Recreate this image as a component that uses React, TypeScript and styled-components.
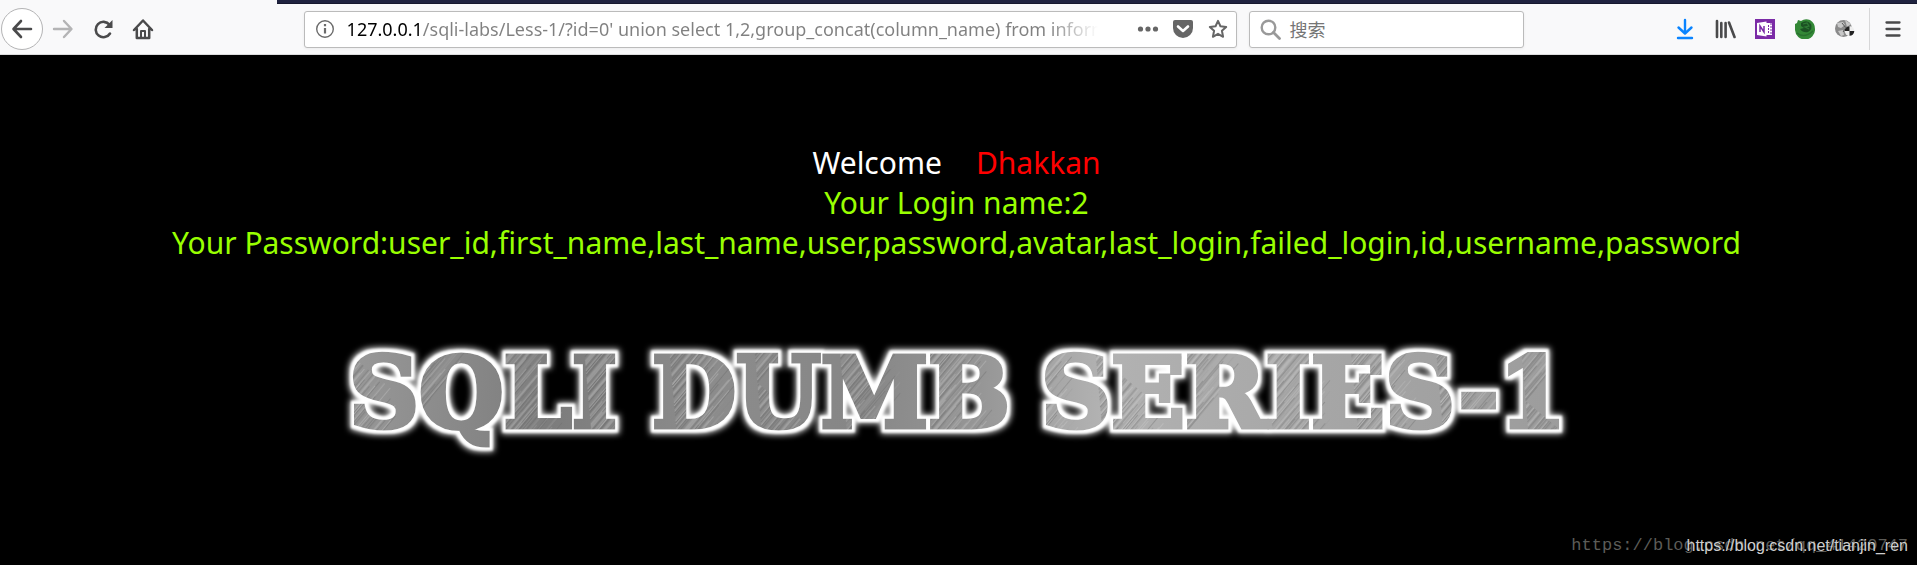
import React from "react";
import styled, { createGlobalStyle } from "styled-components";

const GlobalStyle = createGlobalStyle`
  * { box-sizing: border-box; }
  html, body, #root { margin: 0; min-height: 100vh; background: #000; }
  body { font-family: "Noto Sans", "Open Sans", "Noto Sans CJK SC", sans-serif; }
`;

const Window = styled.div`
  position: relative;
  display: flex;
  flex-direction: column;
  min-height: 100vh;
  overflow: hidden;
`;

const TabStrip = styled.div`
  display: flex;
  height: 4px;
  background: linear-gradient(#202340 75%, #0c0c1c);
`;

const ActiveTab = styled.div`
  width: 277px;
  background: #f9f9fa;
`;

const Toolbar = styled.header`
  display: flex;
  align-items: center;
  height: 51px;
  padding: 0 4px 0 1px;
  background: #f9f9fa;
  border-bottom: 1px solid #dcdcdd;
`;

const Spacer = styled.div`
  flex: 10 1 0;
`;

const Nav = styled.nav`
  display: flex;
  align-items: center;
`;

const IconButton = styled.button<{ $muted?: boolean }>`
  display: flex;
  align-items: center;
  justify-content: center;
  width: 40px;
  height: 40px;
  padding: 0;
  border: 0;
  background: none;
  color: ${(p) => (p.$muted ? "#b4b4b5" : "#4a4a4b")};
`;

const BackButton = styled(IconButton)`
  width: 42px;
  height: 42px;
  border: 1px solid #b4b4b5;
  border-radius: 50%;
  background: #fff;
`;

const Field = styled.div`
  display: flex;
  align-items: center;
  height: 37px;
  border: 1px solid #bbb;
  border-radius: 3px;
  background: #fff;
  box-shadow: 0 1px 3px rgba(0, 0, 0, 0.06);
`;

const UrlField = styled(Field)`
  flex: 65 1 0;
  min-width: 0;
  padding: 0 8px 0 10px;
`;

const SearchField = styled(Field)`
  width: 275px;
  margin-left: 12px;
  padding: 0 8px 0 10px;
  gap: 8px;
`;

const UrlInput = styled.input`
  flex: 1;
  min-width: 0;
  height: 34px;
  margin: 0 32px 0 12px;
  padding: 0;
  border: 0;
  outline: 0;
  font: 18px "Noto Sans", sans-serif;
  color: transparent;
  background: linear-gradient(
    to right,
    #000 76px,
    #808080 76px,
    #808080 calc(100% - 50px),
    rgba(128, 128, 128, 0)
  );
  background-clip: text;
  -webkit-background-clip: text;
`;

const SearchInput = styled.input`
  flex: 1;
  min-width: 0;
  height: 34px;
  padding: 0;
  border: 0;
  outline: 0;
  background: none;
  font: 18px "Noto Sans CJK SC", sans-serif;
  color: #333;
  &::placeholder { color: #757575; opacity: 1; }
`;

const FieldButton = styled(IconButton)`
  width: 35px;
  height: 34px;
  color: #666;
  &:last-child { width: 20px; margin-left: 8px; }
`;

const MenuDivider = styled.div`
  width: 1px;
  height: 42px;
  margin: 0 3px 0 4px;
  background: #d7d7d8;
`;

const Page = styled.main`
  flex: 1;
  display: flex;
  flex-direction: column;
  align-items: center;
  padding: 88px 12px 60px 8px;
  text-align: center;
`;

const Message = styled.p<{ $color: string }>`
  margin: 0;
  font-size: 30px;
  line-height: 40px;
  color: ${(p) => p.$color};
`;

const UserName = styled.span`
  margin-left: 34px;
  color: #f00;
`;

const Banner = styled.svg`
  width: 100%;
  max-width: 1260px;
  margin-top: 72px;
  overflow: visible;
`;

const BannerText = styled.text`
  font: bold 97px "DejaVu Serif", serif;
  fill: url(#brushed);
  stroke: url(#brushed);
  stroke-width: 5px;
`;

const Watermarks = styled.footer`
  position: absolute;
  right: 9px;
  bottom: 7px;
  display: grid;
  justify-items: end;
  align-items: center;
  line-height: 24px;
`;

const Watermark = styled.span<{ $mono?: boolean }>`
  grid-area: 1 / 1;
  font-family: ${(p) => (p.$mono ? '"Liberation Mono", monospace' : '"Liberation Sans", sans-serif')};
  font-size: ${(p) => (p.$mono ? 17 : 16)}px;
  color: ${(p) => (p.$mono ? "#5c5c58" : "#cfcfcf")};
`;

const Stroke = ({ d, width = 2.4, color = "currentColor" }: { d: string; width?: number; color?: string }) => (
  <svg width="22" height="22" viewBox="0 0 22 22" fill="none" stroke={color} strokeWidth={width} strokeLinecap="round" strokeLinejoin="round" aria-hidden="true">
    <path d={d} />
  </svg>
);

const GREYS = ["#666", "#ccc", "#858585", "#a8a8a8", "#5c5c5c", "#9a9a9a", "#d4d4d4"];
const scratches = Array.from({ length: 260 }, (_, i) => ({
  y: (i * 37) % 120,
  x: (i * 83) % 240,
  length: 18 + ((i * 29) % 70),
  color: GREYS[(i * 5 + Math.floor(i / 7)) % GREYS.length],
}));

const BannerTitle = () => (
  <Banner viewBox="0 0 1260 120" role="img" aria-label="SQLI DUMB SERIES-1">
    <defs>
      <linearGradient id="sheen" gradientUnits="userSpaceOnUse" x1="20" y1="0" x2="1240" y2="80">
        <stop offset="0" stopColor="#999" />
        <stop offset="0.17" stopColor="#7c7c7c" />
        <stop offset="0.3" stopColor="#8c8c8c" />
        <stop offset="0.42" stopColor="#868686" />
        <stop offset="0.52" stopColor="#969696" />
        <stop offset="0.62" stopColor="#b2b2b2" />
        <stop offset="0.8" stopColor="#a6a6a6" />
        <stop offset="1" stopColor="#9c9c9c" />
      </linearGradient>
      <pattern id="scratch" width="240" height="120" patternUnits="userSpaceOnUse" patternTransform="rotate(-50)">
        {scratches.map((s, i) => (
          <rect key={i} x={s.x} y={s.y} width={s.length} height="1" fill={s.color} opacity="0.3" />
        ))}
      </pattern>
      <pattern id="brushed" width="1260" height="120" patternUnits="userSpaceOnUse">
        <rect width="1260" height="120" fill="url(#sheen)" />
        <rect width="1260" height="120" fill="url(#scratch)" />
      </pattern>
      <filter id="glow" filterUnits="userSpaceOnUse" x="-20" y="-20" width="1300" height="160">
        <feMorphology in="SourceAlpha" operator="dilate" radius="4" result="wide" />
        <feGaussianBlur in="wide" stdDeviation="3" result="soft" />
        <feFlood floodColor="#fff" />
        <feComposite in2="soft" operator="in" result="halo" />
        <feMorphology in="SourceAlpha" operator="dilate" radius="3" result="near" />
        <feGaussianBlur in="near" stdDeviation="1" result="edge" />
        <feFlood floodColor="#fff" />
        <feComposite in2="edge" operator="in" result="rim" />
        <feMerge>
          <feMergeNode in="halo" />
          <feMergeNode in="rim" />
          <feMergeNode in="SourceGraphic" />
        </feMerge>
      </filter>
    </defs>
    <g filter="url(#glow)">
      <BannerText x="22" y="92">SQLI</BannerText>
      <BannerText x="325" y="92">DUMB</BannerText>
      <BannerText x="714" y="92">SERIES-1</BannerText>
    </g>
  </Banner>
);

export default function App() {
  return (
    <Window>
      <GlobalStyle />
      <TabStrip>
        <ActiveTab />
      </TabStrip>
      <Toolbar>
        <Nav>
          <BackButton aria-label="Back">
            <Stroke d="M20 11H3M10 3L2.500 11L10 19" width={2.6} />
          </BackButton>
          <IconButton $muted aria-label="Forward">
            <Stroke d="M2 11H19M12 3L19.500 11L12 19" width={2.4} />
          </IconButton>
          <IconButton aria-label="Reload">
            <svg width="22" height="22" viewBox="0 0 22 22" fill="none" stroke="currentColor" strokeWidth="2.6" aria-hidden="true">
              <path d="M18 15.500A7.700 7.700 0 1 1 17.500 6.800" strokeLinecap="round" />
              <path d="M20.500 2V10H12.500Z" fill="currentColor" stroke="none" />
            </svg>
          </IconButton>
          <IconButton aria-label="Home">
            <svg width="22" height="22" viewBox="0 0 22 22" fill="none" stroke="currentColor" strokeWidth="2.500" strokeLinejoin="round" strokeLinecap="round" aria-hidden="true">
              <path d="M2 12L11 2.500L20 12M4.800 11V20H17.200V11" />
              <path d="M9 19V13H13V19" strokeWidth="2" />
            </svg>
          </IconButton>
        </Nav>
        <Spacer />
        <UrlField>
          <svg width="20" height="20" viewBox="0 0 20 20" fill="none" stroke="#6b6b6b" aria-hidden="true">
            <circle cx="10" cy="10" r="8.300" strokeWidth="1.400" />
            <path d="M10 9V14.500M10 5V7.200" strokeWidth="2.200" />
          </svg>
          <UrlInput aria-label="Address" defaultValue="127.0.0.1/sqli-labs/Less-1/?id=0' union select 1,2,group_concat(column_name) from information_schema.columns" />
          <FieldButton aria-label="Page actions">
            <svg width="22" height="22" viewBox="0 0 22 22" fill="currentColor" aria-hidden="true">
              <circle cx="3.500" cy="11" r="2.600" />
              <circle cx="11" cy="11" r="2.600" />
              <circle cx="18.500" cy="11" r="2.600" />
            </svg>
          </FieldButton>
          <FieldButton aria-label="Save to Pocket">
            <svg width="22" height="22" viewBox="0 0 22 22" aria-hidden="true">
              <path d="M3 2H19Q21 2 21 4V10A10 10 0 0 1 1 10V4Q1 2 3 2Z" fill="currentColor" />
              <path d="M6 8.500L11 13L16 8.500" fill="none" stroke="#fff" strokeWidth="2.600" strokeLinecap="round" strokeLinejoin="round" />
            </svg>
          </FieldButton>
          <FieldButton aria-label="Bookmark this page">
            <Stroke d="M11 2L13.700 8L20 8.800L15.300 13L16.600 19.600L11 16.300L5.400 19.600L6.700 13L2 8.800L8.300 8Z" width={2.2} />
          </FieldButton>
        </UrlField>
        <SearchField>
          <svg width="21" height="21" viewBox="0 0 21 21" fill="none" stroke="#999" aria-hidden="true">
            <circle cx="8.500" cy="8.500" r="6.800" strokeWidth="2.400" />
            <path d="M13.500 13.500L19.500 19.500" strokeWidth="2.800" strokeLinecap="round" />
          </svg>
          <SearchInput aria-label="搜索" placeholder="搜索" />
        </SearchField>
        <Spacer />
        <IconButton aria-label="Downloads">
          <Stroke d="M11 2V15M4.500 9.500L11 15.500L17.500 9.500M4 20H18" color="#0a84ff" width={2.4} />
        </IconButton>
        <IconButton aria-label="Library">
          <svg width="22" height="22" viewBox="0 0 22 22" fill="none" stroke="currentColor" strokeWidth="2.600" strokeLinecap="round" aria-hidden="true">
            <path d="M3 3V19M7.300 5V19M11.600 5V19M15 4.500L20.500 19" />
          </svg>
        </IconButton>
        <IconButton aria-label="OneNote">
          <svg width="20" height="20" viewBox="0 0 20 20" aria-hidden="true">
            <path d="M0 0H20V20H0Z" fill="#7b2ba6" />
            <path d="M11 4H17V16H11Z" fill="#fff" />
            <path d="M13.500 6V14M16 4V16" stroke="#7b2ba6" strokeWidth="1" strokeDasharray="2 1" />
            <path d="M2 4L11.500 2.500V17.500L2 16Z" fill="#fff" />
            <path d="M5 13V7L9 13V7" fill="none" stroke="#7b2ba6" strokeWidth="1.500" />
          </svg>
        </IconButton>
        <IconButton aria-label="Green fox extension">
          <svg width="20" height="20" viewBox="0 0 20 20" aria-hidden="true">
            <path d="M0 5L2 4L3 1L6 2Q10-1 15 1Q20 4 20 10A10 10 0 0 1 0 11Z" fill="#338836" />
            <path d="M6 4Q12 0 16 5Q18 10 13 13Q8 14 5 10L9 9L6 7Z" fill="#1b5223" />
            <path d="M8 5L12 4L14 7L10 8L14 10" fill="none" stroke="#2f7a35" strokeWidth="1.200" />
            <path d="M2 14Q9 20 18 12" fill="none" stroke="#28702e" strokeWidth="1.500" />
          </svg>
        </IconButton>
        <IconButton aria-label="Proxy extension">
          <svg width="20" height="20" viewBox="0 0 20 20" aria-hidden="true">
            <circle cx="8.500" cy="9.500" r="8.500" fill="#8a8a8a" />
            <path d="M2 4L8 3L10 6L6 9L3 8ZM10 1L16 5L12 8ZM3 12L8 11L9 16L6 17Z" fill="#c8c8c8" />
            <path d="M7 4L11 9L8 13" fill="none" stroke="#555" />
            <circle cx="14.500" cy="12" r="4.800" fill="#eee" />
            <path d="M14.500 12V7.200A4.800 4.800 0 0 0 9.700 12ZM14.500 12V16.800A4.800 4.800 0 0 0 19.300 12Z" fill="#222" />
          </svg>
        </IconButton>
        <MenuDivider />
        <IconButton aria-label="Open menu">
          <Stroke d="M4.500 4.500H17.500M4.500 11H17.500M4.500 17.500H17.500" width={2.3} />
        </IconButton>
      </Toolbar>
      <Page>
        <Message $color="#fff">
          Welcome
          <UserName>Dhakkan</UserName>
        </Message>
        <Message $color="#99ff00">Your Login name:2</Message>
        <Message $color="#99ff00">
          Your Password:user_id,first_name,last_name,user,password,avatar,last_login,failed_login,id,username,password
        </Message>
        <BannerTitle />
      </Page>
      <Watermarks>
        <Watermark $mono>https://blog.csdn.net/qq_41420747</Watermark>
        <Watermark>https://blog.csdn.net/tianjin_ren</Watermark>
      </Watermarks>
    </Window>
  );
}
